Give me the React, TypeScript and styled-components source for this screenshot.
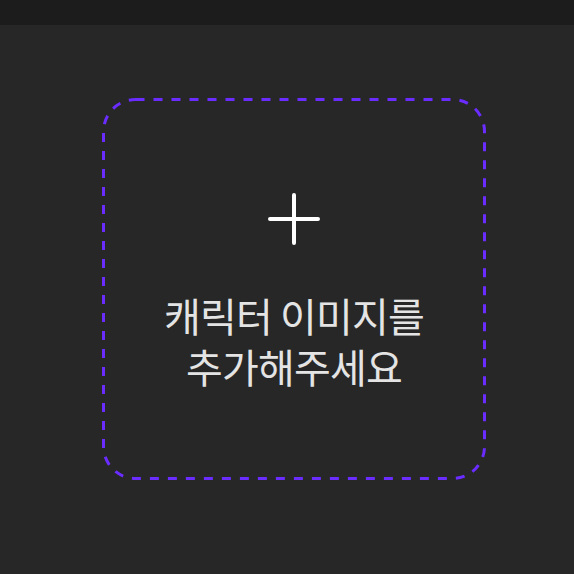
import React from "react";
import styled, { createGlobalStyle } from "styled-components";

const Global = createGlobalStyle`
  html, body { margin: 0; padding: 0; background: #262726; }
  body { font-family: "Noto Sans CJK KR", "Noto Sans", sans-serif; }
`;

const Page = styled.div`
  width: 574px;
  height: 574px;
  display: flex;
  flex-direction: column;
  background: #262726;
  overflow: hidden;
`;

const TopBar = styled.div`
  height: 25px;
  flex-shrink: 0;
  background: #1b1c1b;
`;

const Main = styled.main`
  flex: 1;
  padding: 73px 0 0 102px;
`;

const DropZone = styled.button`
  position: relative;
  box-sizing: border-box;
  width: 384px;
  height: 382px;
  border: none;
  border-radius: 32px;
  background: transparent;
  display: flex;
  flex-direction: column;
  align-items: center;
  padding: 95px 0 0;
  gap: 45px;
  cursor: pointer;
  font-family: inherit;
`;

const DashFrame = styled.svg`
  position: absolute;
  inset: 0;
  pointer-events: none;
`;

const Label = styled.div`
  color: #e4e4e4;
  font-size: 40px;
  line-height: 51px;
  text-align: center;
  font-weight: 400;
  letter-spacing: -0.8px;
`;

const PlusIcon = () => (
  <svg width="52" height="52" viewBox="0 0 52 52" fill="none">
    <path d="M26 2v48M2 26h48" stroke="#fff" strokeWidth="4" strokeLinecap="round" />
  </svg>
);

export default function App() {
  return (
    <Page>
      <Global />
      <TopBar />
      <Main>
        <DropZone>
          <DashFrame width="384" height="382" viewBox="0 0 384 382">
            <rect
              x="1.5"
              y="1.5"
              width="381"
              height="379"
              rx="32"
              fill="none"
              stroke="#6a2cff"
              strokeWidth="3"
              strokeDasharray="9 9"
            />
          </DashFrame>
          <PlusIcon />
          <Label>
            캐릭터 이미지를
            <br />
            추가해주세요
          </Label>
        </DropZone>
      </Main>
    </Page>
  );
}
